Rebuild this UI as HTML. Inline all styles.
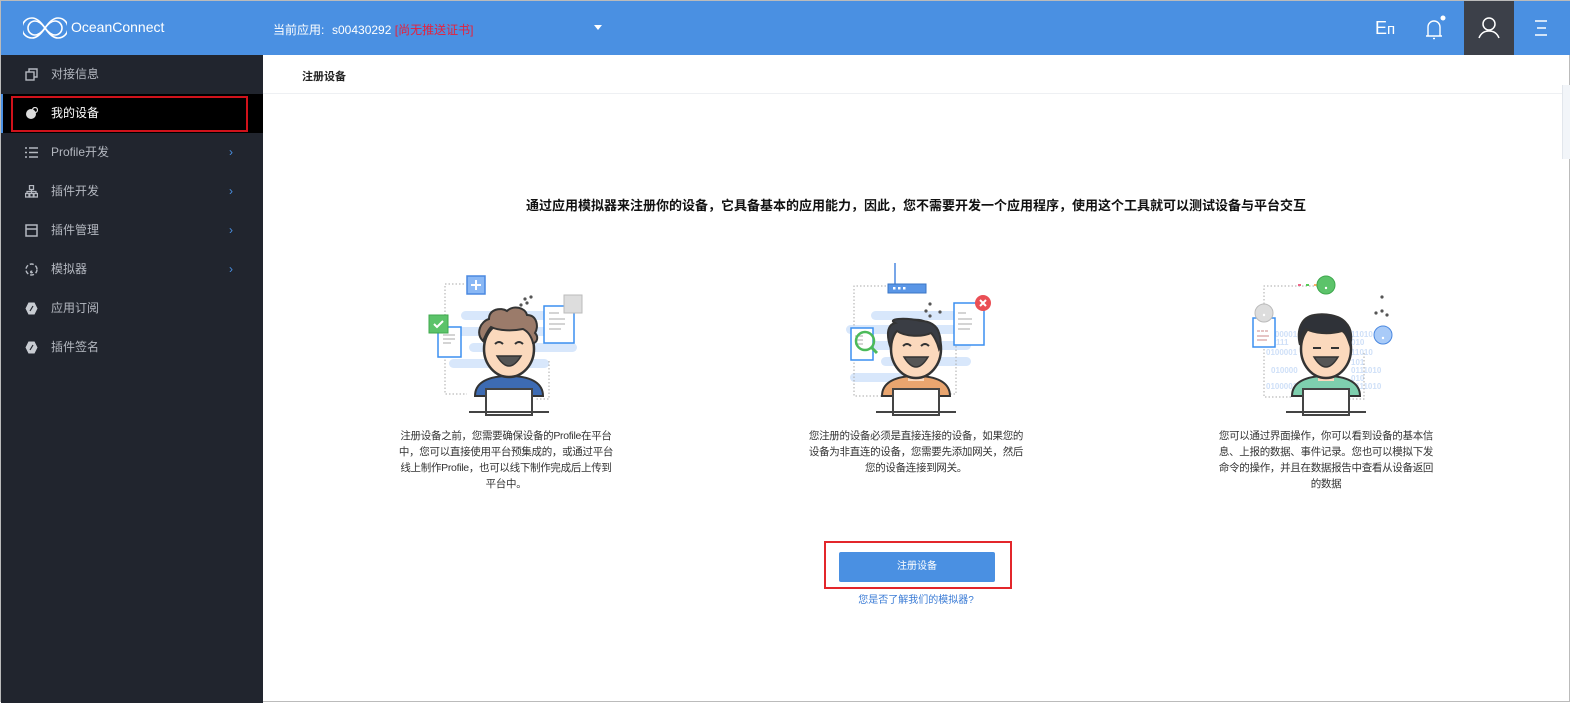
<!DOCTYPE html>
<html><head><meta charset="utf-8"><style>
*{margin:0;padding:0;box-sizing:border-box}
body{width:1570px;height:702px;overflow:hidden;font-family:"Liberation Sans","Noto Sans CJK SC",sans-serif;background:#fff;position:relative;border:1px solid #bbb}
.hdr{position:absolute;left:0;top:0;width:1570px;height:54px;background:#4a90e2;color:#fff}
.side{position:absolute;left:0;top:54px;width:262px;height:648px;background:#21252e}
.item{position:absolute;left:0;width:262px;height:39px;color:#b4b8c0;font-size:12px;line-height:39px}
.item .ic{position:absolute;left:24px;top:13px;width:13px;height:13px}
.item .t{position:absolute;left:50px}
.item .ar{position:absolute;left:228px;color:#4a90e2;font-size:12px}
.abs{position:absolute}
.desc{position:absolute;font-size:10.5px;line-height:16px;color:#333;text-align:center;white-space:nowrap;letter-spacing:-0.3px}
</style></head><body>
<div class="hdr">
 <svg class="abs" style="left:22px;top:13px" width="44" height="28" viewBox="0 0 44 28" fill="none" stroke="#fff" stroke-width="1.6">
  <path d="M22 14c-4-6-8-10-13-10a10 10 0 0 0 0 20c5 0 9-4 13-10s8-10 13-10a10 10 0 0 1 0 20c-5 0-9-4-13-10z"/>
  <path d="M22 14c-3-4-6-7-10-7a7 7 0 0 0 0 14c4 0 7-3 10-7s6-7 10-7a7 7 0 0 1 0 14c-4 0-7-3-10-7z"/>
 </svg>
 <div class="abs" style="left:70px;top:18px;font-size:14px">OceanConnect</div>
 <div class="abs" style="left:272px;top:20px;font-size:12px">当前应用:</div>
 <div class="abs" style="left:331px;top:20px;font-size:12px">s00430292 <span style="color:#e8203a">[尚无推送证书]</span></div>
 <div class="abs" style="left:593px;top:24px;width:0;height:0;border-left:4px solid transparent;border-right:4px solid transparent;border-top:5px solid #fff"></div>
 <div class="abs" style="left:1374px;top:17px;font-size:18px">E<span style="font-size:15px">п</span></div>
 <svg class="abs" style="left:1420px;top:14px" width="26" height="28" viewBox="0 0 26 28" fill="none" stroke="#fff" stroke-width="1.4"><path d="M5 21h16M7 21V12a6 6 0 0 1 12 0v9"/><path d="M12 23.5h2"/><circle cx="22" cy="3" r="2.5" fill="#fff" stroke="none"/></svg>
 <div class="abs" style="left:1463px;top:0;width:50px;height:54px;background:#3c4049"></div>
 <svg class="abs" style="left:1476px;top:15px" width="24" height="24" viewBox="0 0 24 24" fill="none" stroke="#fff" stroke-width="1.5"><circle cx="12" cy="8" r="6"/><path d="M2 22c2-5 6-7 10-7s8 2 10 7"/></svg>
 <svg class="abs" style="left:1533px;top:19px" width="14" height="16" viewBox="0 0 14 16" stroke="#fff" stroke-width="1.4"><path d="M1 1h12M3 8h9M1 15h12"/></svg>
</div>
<div class="side">
 <div class="item" style="top:0"><svg class="ic" viewBox="0 0 13 13" fill="none" stroke="#b4b8c0" stroke-width="1.4"><rect x="1" y="4" width="8" height="8"/><path d="M4 4V1h8v8H9"/></svg><span class="t">对接信息</span></div>
 <div class="item" style="top:39px;background:#000;color:#fff"><svg class="ic" viewBox="0 0 13 13"><circle cx="6" cy="7" r="5" fill="#ddd"/><circle cx="10" cy="3" r="2.5" fill="none" stroke="#ddd" stroke-width="1.2"/></svg><span class="t">我的设备</span></div>
 <div class="abs" style="left:10px;top:41px;width:237px;height:36px;border:2px solid #d0121b"></div>
 <div class="abs" style="left:0;top:39px;width:2px;height:39px;background:#4a90e2"></div>
 <div class="item" style="top:78px"><svg class="ic" viewBox="0 0 13 13" stroke="#b4b8c0" stroke-width="1.6"><path d="M0 2h2M4 2h9M0 6.5h2M4 6.5h9M0 11h2M4 11h9"/></svg><span class="t">Profile开发</span><span class="ar">›</span></div>
 <div class="item" style="top:117px"><svg class="ic" viewBox="0 0 13 13" fill="none" stroke="#b4b8c0" stroke-width="1.3"><rect x="4.5" y="0.5" width="4" height="4"/><rect x="0.5" y="8.5" width="3.5" height="3.5"/><rect x="4.8" y="8.5" width="3.5" height="3.5"/><rect x="9" y="8.5" width="3.5" height="3.5"/><path d="M6.5 4.5v4M2 8.5V6.5h9v2"/></svg><span class="t">插件开发</span><span class="ar">›</span></div>
 <div class="item" style="top:156px"><svg class="ic" viewBox="0 0 13 13" fill="none" stroke="#b4b8c0" stroke-width="1.5"><rect x="1" y="1" width="11" height="11"/><path d="M1 5h11"/></svg><span class="t">插件管理</span><span class="ar">›</span></div>
 <div class="item" style="top:195px"><svg class="ic" viewBox="0 0 13 13" fill="none" stroke="#b4b8c0" stroke-width="1.4" stroke-dasharray="4 2"><circle cx="6.5" cy="6.5" r="5.5"/><circle cx="6.5" cy="9" r="0.8" fill="#b4b8c0"/></svg><span class="t">模拟器</span><span class="ar">›</span></div>
 <div class="item" style="top:234px"><svg class="ic" viewBox="0 0 13 13"><path d="M3.5 0.5h6l3 6-3 6h-6l-3-6z" fill="#c8ccd2"/><path d="M5 9l3-5" stroke="#21252e" stroke-width="1.2"/></svg><span class="t">应用订阅</span></div>
 <div class="item" style="top:273px"><svg class="ic" viewBox="0 0 13 13"><path d="M3.5 0.5h6l3 6-3 6h-6l-3-6z" fill="#c8ccd2"/><path d="M5 9l3-5" stroke="#21252e" stroke-width="1.2"/></svg><span class="t">插件签名</span></div>
</div>
<div class="abs" style="left:301px;top:67px;font-size:11px;font-weight:bold;color:#222">注册设备</div>
<div class="abs" style="left:262px;top:92px;width:1300px;height:1px;background:#eef0f3"></div>
<div class="abs" style="left:1561px;top:84px;width:9px;height:74px;background:#f2f5f9;border-left:1px solid #e2e6ec"></div>
<div class="abs" style="left:262px;top:194px;width:1306px;text-align:center;font-size:13px;font-weight:bold;color:#111">通过应用模拟器来注册你的设备，它具备基本的应用能力，因此，您不需要开发一个应用程序，使用这个工具就可以测试设备与平台交互</div>

<!-- illustration 1 -->
<svg class="abs" style="left:408px;top:260px" width="200" height="160" viewBox="0 0 200 160">
 <g fill="#d8e7fb"><rect x="52" y="50" width="100" height="9" rx="4.5"/><rect x="30" y="66" width="120" height="9" rx="4.5"/><rect x="60" y="82" width="108" height="9" rx="4.5"/><rect x="40" y="98" width="100" height="9" rx="4.5"/></g>
 <path d="M55 23H36v110h22M140 100v38h-14" fill="none" stroke="#aaa" stroke-dasharray="1.5 2"/>
 <rect x="58" y="15" width="18" height="18" fill="#8ab8f5" stroke="#4a88e0" stroke-width="1.5"/><path d="M67 19v10M62 24h10" stroke="#fff" stroke-width="2"/>
 <rect x="29" y="66" width="23" height="30" fill="#fff" stroke="#3b8ff0" stroke-width="1.5"/><path d="M34 74h12M34 78h12M34 82h8" stroke="#aaa"/>
 <rect x="20" y="54" width="19" height="18" fill="#5cc36a" stroke="#3fa84e"/><path d="M25 63l3 3 6-6" stroke="#fff" stroke-width="2" fill="none"/>
 <rect x="135" y="45" width="30" height="37" fill="#fff" stroke="#3b8ff0" stroke-width="1.5"/><path d="M140 52h10M140 58h16M140 63h16M140 68h12" stroke="#aaa"/>
 <rect x="155" y="34" width="18" height="18" fill="#ddd" stroke="#bbb"/>
 <g fill="#555"><circle cx="116" cy="38" r="1.6"/><circle cx="122" cy="36" r="1.6"/><circle cx="112" cy="44" r="1.6"/><circle cx="118" cy="42" r="1.6"/></g>
 <path d="M66 135c0-14 14-20 34-20s34 6 34 20z" fill="#3d6bb3" stroke="#333" stroke-width="2"/>
 <ellipse cx="100" cy="88" rx="25" ry="28" fill="#fbd9bd" stroke="#333" stroke-width="2.5"/>
 <path d="M74 80c-8-8-2-20 6-22 0-10 12-12 18-8 6-6 18-4 20 4 10 0 12 12 8 18 4 4 2 10-2 10-2-8-6-12-10-14-10 2-24 2-32-2-4 4-6 10-8 14z" fill="#9b7b6a" stroke="#333" stroke-width="2"/>
 <path d="M86 83q4-4 8 0M106 83q4-4 8 0" stroke="#333" stroke-width="2" fill="none"/>
 <path d="M88 95q12 20 24 0z" fill="#555" stroke="#333" stroke-width="1.5"/>
 <rect x="77" y="128" width="46" height="26" fill="#fff" stroke="#444" stroke-width="2"/>
 <path d="M60 151h80" stroke="#444" stroke-width="2"/>
</svg>
<div class="desc" style="left:355px;top:427px;width:300px">注册设备之前，您需要确保设备的Profile在平台<br>中，您可以直接使用平台预集成的，或通过平台<br>线上制作Profile，也可以线下制作完成后上传到<br>平台中。</div>

<!-- illustration 2 -->
<svg class="abs" style="left:815px;top:260px" width="200" height="160" viewBox="0 0 200 160">
 <g fill="#d8e7fb"><rect x="55" y="50" width="100" height="9" rx="4.5"/><rect x="30" y="64" width="120" height="9" rx="4.5"/><rect x="50" y="80" width="105" height="9" rx="4.5"/><rect x="65" y="96" width="90" height="9" rx="4.5"/><rect x="34" y="112" width="70" height="9" rx="4.5"/></g>
 <path d="M70 25H38v110h30M140 85v48h-14" fill="none" stroke="#aaa" stroke-dasharray="1.5 2"/>
 <path d="M79 2v22" stroke="#4a88e0" stroke-width="1.5"/>
 <rect x="72" y="23" width="38" height="9" fill="#5a96e6" stroke="#3a76c6"/><g fill="#fff"><rect x="77" y="26" width="2.5" height="2.5"/><rect x="82" y="26" width="2.5" height="2.5"/><rect x="87" y="26" width="2.5" height="2.5"/></g>
 <rect x="35" y="67" width="22" height="32" fill="#fff" stroke="#3b8ff0" stroke-width="1.5"/><path d="M39 75h8M39 79h8M39 83h8" stroke="#aaa"/>
 <circle cx="49" cy="80" r="9" fill="none" stroke="#4cba5a" stroke-width="2.5"/><path d="M55 86l6 6" stroke="#4cba5a" stroke-width="3"/>
 <rect x="138" y="42" width="30" height="42" fill="#fff" stroke="#3b8ff0" stroke-width="1.5"/><path d="M142 52h8M142 58h14M142 63h14M142 68h12" stroke="#aaa"/>
 <circle cx="167" cy="42" r="8" fill="#ea4f55"/><path d="M164 39l6 6M170 39l-6 6" stroke="#fff" stroke-width="2"/>
 <g fill="#555"><circle cx="114" cy="43" r="1.6"/><circle cx="110" cy="50" r="1.6"/><circle cx="124" cy="51" r="1.6"/><circle cx="114" cy="55" r="1.6"/></g>
 <path d="M66 135c0-14 14-20 34-20s34 6 34 20z" fill="#e9a56f" stroke="#333" stroke-width="2"/>
 <rect x="92" y="110" width="16" height="10" fill="#fbd9bd"/>
 <ellipse cx="100" cy="88" rx="25" ry="29" fill="#fbd9bd" stroke="#333" stroke-width="2.5"/>
 <path d="M75 88c-5-14-4-24 4-26-8-4 8-6 26-2 8 0 16 4 18 12 2 6 2 12 0 16-2-8-6-14-8-16-8 4-26 4-34-2-4 4-6 10-6 18z" fill="#3a3d44" stroke="#333" stroke-width="2"/>
 <path d="M87 85q4-4 8 0M105 85q4-4 8 0" stroke="#333" stroke-width="2" fill="none"/>
 <path d="M88 96q12 20 24 0z" fill="#555" stroke="#333" stroke-width="1.5"/>
 <rect x="77" y="128" width="46" height="26" fill="#fff" stroke="#444" stroke-width="2"/>
 <path d="M60 151h80" stroke="#444" stroke-width="2"/>
</svg>
<div class="desc" style="left:765px;top:427px;width:300px">您注册的设备必须是直接连接的设备，如果您的<br>设备为非直连的设备，您需要先添加网关，然后<br>您的设备连接到网关。</div>

<!-- illustration 3 -->
<svg class="abs" style="left:1225px;top:260px" width="200" height="160" viewBox="0 0 200 160">
 <g fill="#cfe0f8" font-size="8" font-family="Liberation Sans" font-weight="bold"><text x="40" y="76">0100001</text><text x="125" y="76">11010</text><text x="50" y="84">111</text><text x="125" y="84">010</text><text x="40" y="94">0100001</text><text x="125" y="94">11010</text><text x="125" y="104">101</text><text x="45" y="112">010000</text><text x="125" y="112">0111010</text><text x="125" y="120">010</text><text x="40" y="128">0100001111</text><text x="125" y="128">0111010</text></g>
 <path d="M38 50V25h60M138 92v46h-14M38 60v76h28" fill="none" stroke="#aaa" stroke-dasharray="1.5 2"/>
 <g fill="#e68"><rect x="72" y="23" width="3" height="2"/><rect x="80" y="23" width="3" height="2" fill="#5c5"/><rect x="88" y="23" width="3" height="2" fill="#fa6"/></g>
 <circle cx="100" cy="24" r="9" fill="#5cc36a" stroke="#3fa84e"/><circle cx="100" cy="27" r="1.2" fill="#fff"/>
 <rect x="27" y="57" width="22" height="29" fill="#fff" stroke="#3b8ff0" stroke-width="1.5"/><path d="M31 70h3M35 70h3M39 70h3M31 75h12M31 79h10" stroke="#c88"/>
 <circle cx="38" cy="52" r="9" fill="#ddd" stroke="#bbb"/><circle cx="38" cy="54" r="1.2" fill="#fff"/>
 <circle cx="157" cy="74" r="9" fill="#a9cbf8" stroke="#4a88e0"/><circle cx="157" cy="77" r="1.2" fill="#fff"/>
 <g fill="#555"><circle cx="156" cy="36" r="1.6"/><circle cx="150" cy="52" r="1.6"/><circle cx="156" cy="50" r="1.6"/><circle cx="161" cy="54" r="1.6"/></g>
 <path d="M66 135c0-14 14-20 34-20s34 6 34 20z" fill="#7ecfae" stroke="#333" stroke-width="2"/>
 <rect x="92" y="110" width="16" height="10" fill="#fbd9bd"/>
 <ellipse cx="100" cy="88" rx="25" ry="29" fill="#fbd9bd" stroke="#333" stroke-width="2.5"/>
 <path d="M74 84c-4-16 2-28 14-30 10-2 26 0 32 8 6 6 6 16 4 22-2-6-4-12-8-14-14 4-28 2-36-2-4 4-6 10-6 16z" fill="#2f3238" stroke="#333" stroke-width="2"/>
 <path d="M87 87h8M105 87h8" stroke="#333" stroke-width="2"/>
 <path d="M88 96q12 20 24 0z" fill="#555" stroke="#333" stroke-width="1.5"/>
 <rect x="77" y="128" width="46" height="26" fill="#fff" stroke="#444" stroke-width="2"/>
 <path d="M60 151h80" stroke="#444" stroke-width="2"/>
</svg>
<div class="desc" style="left:1175px;top:427px;width:300px">您可以通过界面操作，你可以看到设备的基本信<br>息、上报的数据、事件记录。您也可以模拟下发<br>命令的操作，并且在数据报告中查看从设备返回<br>的数据</div>

<div class="abs" style="left:823px;top:540px;width:188px;height:48px;border:2px solid #e3262b"></div>
<div class="abs" style="left:838px;top:551px;width:156px;height:30px;background:#4a90e2;border-radius:2px;color:#fff;font-size:10px;line-height:30px;text-align:center">注册设备</div>
<div class="abs" style="left:800px;top:590px;width:230px;text-align:center;font-size:10px;color:#3a7bd5">您是否了解我们的模拟器?</div>
</body></html>
